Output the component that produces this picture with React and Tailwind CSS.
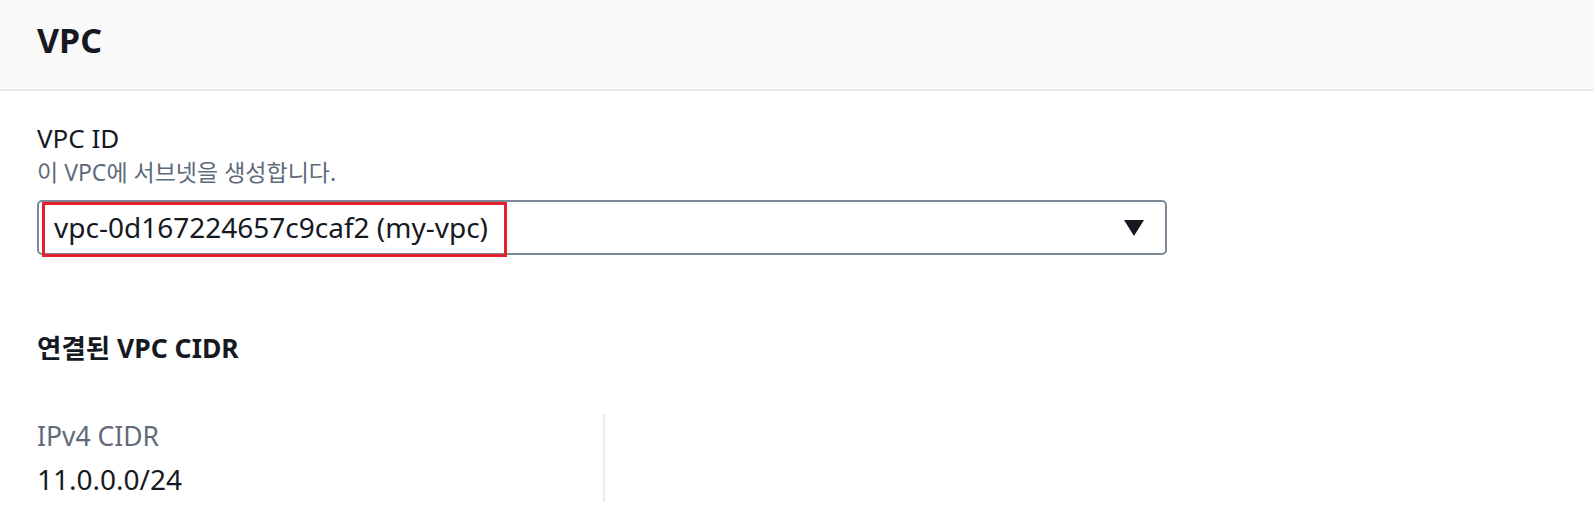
export default function App() {
  return (
    <div
      className="w-full min-h-screen bg-white text-[#16191f]"
      style={{ fontFamily: '"Noto Sans", "Noto Sans CJK KR", sans-serif' }}
    >
      <div className="h-[91px] bg-[#fafafa] border-b-2 border-[#e9ebed] pl-[37px] pt-[23px]">
        <h2 className="text-[34px] leading-[34px] font-bold">VPC</h2>
      </div>

      <div className="pl-[37px] pt-[31px]">
        <div className="text-[26px] leading-[32px]">VPC ID</div>
        <div className="mt-[4px] text-[23px] leading-[28px] text-[#5f6b7a]">
          이 VPC에 서브넷을 생성합니다.
        </div>

        <div className="relative mt-[14px] w-[1130px] h-[55px] rounded-[5px] border-2 border-[#7d8998] flex items-center justify-between pl-[15px] pr-[21px]">
          <span className="text-[28px] leading-[51px]">vpc-0d167224657c9caf2 (my-vpc)</span>
          <svg width="20" height="16" viewBox="0 0 20 16" className="shrink-0">
            <path d="M0 0 H20 L10 16 Z" fill="#16191f" />
          </svg>
          <div className="absolute left-[3px] top-0 w-[465px] h-[55px] border-[3px] border-[#e3202c] pointer-events-none" />
        </div>

        <div className="mt-[77px] text-[26.5px] leading-[32px] font-bold">연결된 VPC CIDR</div>

        <div className="mt-[50px] flex">
          <div className="w-[566px] pt-[5px] pb-[5px]">
            <div className="text-[26.5px] leading-[34px] text-[#5f6b7a]">IPv4 CIDR</div>
            <div className="mt-[8px] text-[28px] leading-[36px]">11.0.0.0/24</div>
          </div>
          <div className="w-[2px] h-[88px] bg-[#e9ebed]" />
        </div>
      </div>
    </div>
  );
}
